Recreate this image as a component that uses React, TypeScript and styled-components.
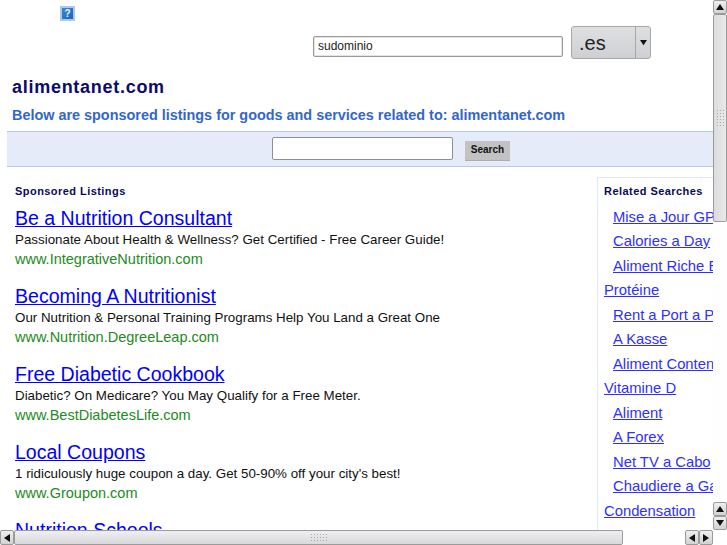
import React from "react";
import styled, { createGlobalStyle } from "styled-components";

const Global = createGlobalStyle`
  html, body { margin: 0; padding: 0; height: 100%; overflow: hidden; background: #fff; }
  body { font-family: "Liberation Sans", Arial, sans-serif; }
  #root { height: 100%; }
`;

const Viewport = styled.div`
  display: grid;
  grid-template-columns: 713px 14px;
  grid-template-rows: 530px 15px;
  width: 727px;
  height: 545px;
`;
const Page = styled.main`
  overflow: hidden;
  min-width: 0;
  padding-left: 7px;
  display: flex;
  flex-direction: column;
`;
const HelpRow = styled.div`
  height: 26px;
  padding: 6px 0 0 53px;
  box-sizing: border-box;
  flex: none;
`;
const HelpIcon = styled.div`
  width: 11px;
  height: 11px;
  border: 2px solid #a9c9ee;
  background: linear-gradient(135deg, #3a8ad0, #1c66ad);
  color: #e8f2ff;
  font: bold 10px/11px "Liberation Sans", sans-serif;
  text-align: center;
`;
const DomainForm = styled.div`
  display: flex;
  align-items: flex-start;
  gap: 8px;
  padding-left: 306px;
  height: 33px;
  flex: none;
`;
const DomainInput = styled.div`
  width: 250px;
  height: 21px;
  margin-top: 10px;
  box-sizing: border-box;
  border: 1px solid #9a9a9a;
  border-radius: 2px;
  box-shadow: inset 0 0 0 1px #e4e4e4;
  padding-left: 4px;
  font-size: 12px;
  line-height: 19px;
  color: #222;
`;
const Select = styled.div`
  width: 80px;
  height: 33px;
  box-sizing: border-box;
  border: 1px solid #a8a8a8;
  border-radius: 3px;
  background: linear-gradient(#dedfe1, #cfd0d3);
  display: flex;
`;
const SelectValue = styled.div`
  flex: 1;
  padding-left: 7px;
  font-size: 20px;
  line-height: 33px;
  color: #222;
`;
const SelectArrow = styled.div`
  width: 14px;
  border-left: 1px solid #a8a8a8;
  display: flex;
  align-items: center;
  justify-content: center;
`;
const Title = styled.h1`
  margin: 17px 0 0 5px;
  font-size: 18px;
  letter-spacing: 0.72px;
  line-height: 22px;
  font-weight: bold;
  color: #0b0b6b;
`;
const Subtitle = styled.h2`
  margin: 7px 0 0 5px;
  font-size: 14.42px;
  line-height: 20px;
  font-weight: bold;
  color: #3366cc;
  white-space: nowrap;
`;
const SearchBand = styled.div`
  margin-top: 6px;
  height: 36px;
  box-sizing: border-box;
  border-top: 1px solid #b3c8ee;
  border-bottom: 1px solid #b3c8ee;
  background: #e5ebf9;
  display: flex;
  align-items: flex-start;
  padding-left: 265px;
  flex: none;
`;
const SearchInput = styled.div`
  width: 181px;
  height: 23px;
  margin-top: 5px;
  box-sizing: border-box;
  background: #fff;
  border: 1px solid #8f8f8f;
  border-radius: 2px;
`;
const SearchButton = styled.div`
  width: 45px;
  height: 20px;
  margin: 9px 0 0 12px;
  background: #c2c2c2;
  border-bottom: 1px solid #adadad;
  box-sizing: border-box;
  font-size: 10px;
  font-weight: bold;
  line-height: 17px;
  text-align: center;
  color: #111;
`;
const Content = styled.div`
  display: flex;
  align-items: flex-start;
  flex: none;
`;
const Listings = styled.section`
  width: 590px;
  flex: none;
  padding: 17px 0 0 8px;
  box-sizing: border-box;
`;
const SectionLabel = styled.div`
  font-size: 11px;
  letter-spacing: 0.45px;
  line-height: 14px;
  font-weight: bold;
  color: #0b0b55;
`;
const Listing = styled.article`
  height: 78px;
  &:first-of-type { margin-top: 7px; }
`;
const ListingTitle = styled.a`
  display: block;
  font-size: 19.55px;
  line-height: 26px;
  color: #0000ff;
  text-decoration: underline;
  white-space: nowrap;
`;
const ListingDesc = styled.div`
  font-size: 13.35px;
  line-height: 19px;
  margin-top: -1px;
  color: #111;
  white-space: nowrap;
`;
const ListingUrl = styled.div`
  font-size: 14.5px;
  line-height: 20px;
  color: #228b22;
  white-space: nowrap;
`;
const Related = styled.aside`
  margin-top: 10px;
  width: 200px;
  height: 420px;
  flex: none;
  box-sizing: border-box;
  border: 1px solid #e0e7f8;
  padding: 6px 0 0 6px;
`;
const RelatedLink = styled.a<{ $flush?: boolean }>`
  display: block;
  height: 24.5px;
  padding-left: ${(p) => (p.$flush ? 0 : "9px")};
  font-size: 14.8px;
  line-height: 24.5px;
  color: #2f2fff;
  text-decoration: underline;
  white-space: nowrap;
`;
const RelatedList = styled.div`
  margin-top: 6.5px;
`;

const track = `
  background-color: #f4f4f4;
  background-image: radial-gradient(#fff 0.7px, transparent 0.8px);
  background-size: 2px 2px;
`;
const VBar = styled.div`
  grid-row: 1;
  grid-column: 2;
  display: flex;
  flex-direction: column;
  ${track}
`;
const HBar = styled.div`
  grid-row: 2;
  grid-column: 1;
  display: flex;
  ${track}
`;
const Corner = styled.div`
  grid-row: 2;
  grid-column: 2;
  background: #fff;
`;
const ArrowButton = styled.div`
  width: 14px;
  height: 14px;
  flex: none;
  box-sizing: border-box;
  border: 1px solid #9b9b9b;
  border-radius: 2px;
  background: linear-gradient(#efefef, #d2d2d2);
  display: flex;
  align-items: center;
  justify-content: center;
`;
const HArrowButton = styled(ArrowButton)`
  height: 15px;
`;
const VThumb = styled.div`
  height: 208px;
  flex: none;
  box-sizing: border-box;
  border: 1px solid #9b9b9b;
  border-radius: 2px;
  background: linear-gradient(90deg, #dcdcdf, #e9e9ec);
  display: flex;
  align-items: center;
  justify-content: center;
`;
const HThumb = styled.div`
  width: 609px;
  flex: none;
  box-sizing: border-box;
  border: 1px solid #9b9b9b;
  border-radius: 2px;
  background: linear-gradient(#efeff1, #d9d9dc);
  display: flex;
  align-items: center;
  justify-content: center;
`;
const Grip = styled.div<{ $w: number; $h: number }>`
  width: ${(p) => p.$w}px;
  height: ${(p) => p.$h}px;
  background-image: radial-gradient(#a9a9a9 0.8px, transparent 0.9px);
  background-size: 3px 3px;
`;
const Spacer = styled.div`
  flex: 1;
`;

const Tri = ({ dir, color = "#111", size = 8 }: { dir: "up" | "down" | "left" | "right"; color?: string; size?: number }) => {
  const pts = { up: "4,1 8,7 0,7", down: "0,1 8,1 4,7", left: "1,4 7,0 7,8", right: "1,0 7,4 1,8" }[dir];
  return (
    <svg width={size} height={size} viewBox="0 0 8 8">
      <polygon points={pts} fill={color} />
    </svg>
  );
};

const ads = [
  ["Be a Nutrition Consultant", "Passionate About Health & Wellness? Get Certified - Free Career Guide!", "www.IntegrativeNutrition.com"],
  ["Becoming A Nutritionist", "Our Nutrition & Personal Training Programs Help You Land a Great One", "www.Nutrition.DegreeLeap.com"],
  ["Free Diabetic Cookbook", "Diabetic? On Medicare? You May Qualify for a Free Meter.", "www.BestDiabetesLife.com"],
  ["Local Coupons", "1 ridiculously huge coupon a day. Get 50-90% off your city's best!", "www.Groupon.com"],
  ["Nutrition Schools", "", ""],
];

const related: [string, boolean?][] = [
  ["Mise a Jour GPS"],
  ["Calories a Day"],
  ["Aliment Riche En"],
  ["Protéine", true],
  ["Rent a Port a Potty"],
  ["A Kasse"],
  ["Aliment Contenant"],
  ["Vitamine D", true],
  ["Aliment"],
  ["A Forex"],
  ["Net TV a Cabo"],
  ["Chaudiere a Gaz"],
  ["Condensation", true],
];

export default function App() {
  return (
    <Viewport>
      <Global />
      <Page>
        <HelpRow>
          <HelpIcon>?</HelpIcon>
        </HelpRow>
        <DomainForm>
          <DomainInput>sudominio</DomainInput>
          <Select>
            <SelectValue>.es</SelectValue>
            <SelectArrow>
              <Tri dir="down" size={7} />
            </SelectArrow>
          </Select>
        </DomainForm>
        <Title>alimentanet.com</Title>
        <Subtitle>Below are sponsored listings for goods and services related to: alimentanet.com</Subtitle>
        <SearchBand>
          <SearchInput />
          <SearchButton>Search</SearchButton>
        </SearchBand>
        <Content>
          <Listings>
            <SectionLabel>Sponsored Listings</SectionLabel>
            {ads.map(([t, d, u]) => (
              <Listing key={t}>
                <ListingTitle href="#">{t}</ListingTitle>
                <ListingDesc>{d}</ListingDesc>
                <ListingUrl>{u}</ListingUrl>
              </Listing>
            ))}
          </Listings>
          <Related>
            <SectionLabel>Related Searches</SectionLabel>
            <RelatedList>
              {related.map(([t, flush]) => (
                <RelatedLink key={t} href="#" $flush={flush}>
                  {t}
                </RelatedLink>
              ))}
            </RelatedList>
          </Related>
        </Content>
      </Page>
      <VBar>
        <ArrowButton>
          <Tri dir="up" />
        </ArrowButton>
        <VThumb>
          <Grip $w={9} $h={18} />
        </VThumb>
        <Spacer />
        <ArrowButton>
          <Tri dir="up" />
        </ArrowButton>
        <ArrowButton>
          <Tri dir="down" />
        </ArrowButton>
      </VBar>
      <HBar>
        <HArrowButton>
          <Tri dir="left" />
        </HArrowButton>
        <HThumb>
          <Grip $w={18} $h={9} />
        </HThumb>
        <Spacer />
        <HArrowButton>
          <Tri dir="left" />
        </HArrowButton>
        <HArrowButton>
          <Tri dir="right" />
        </HArrowButton>
      </HBar>
      <Corner />
    </Viewport>
  );
}
